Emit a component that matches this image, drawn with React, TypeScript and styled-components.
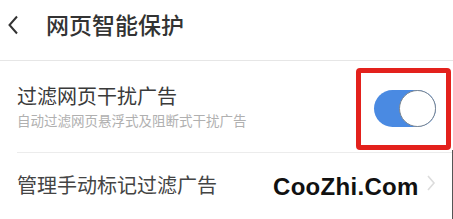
import React from "react";
import styled, { createGlobalStyle } from "styled-components";

const Global = createGlobalStyle`
  html, body { margin: 0; padding: 0; background: #fff; }
  body { font-family: "Noto Sans CJK SC", "Noto Sans", sans-serif; }
`;

const Page = styled.div`
  width: 453px;
  height: 219px;
  overflow: hidden;
  background: #fff;
  position: relative;
`;

const Header = styled.div`
  height: 60px;
  display: flex;
  align-items: center;
  border-bottom: 1px solid #e6e6e6;
  box-sizing: content-box;
`;

const Back = styled.div`
  width: 46px;
  height: 60px;
  display: flex;
  align-items: center;
  padding-left: 7px;
  box-sizing: border-box;
  margin-top: -10px;
`;

const Title = styled.div`
  font-size: 23px;
  font-weight: 500;
  color: #333;
  margin-top: -12px;
`;

const Row = styled.div<{ $h: number; $divider?: boolean }>`
  position: relative;
  height: ${(p) => p.$h}px;
  display: flex;
  align-items: center;
  padding: 0 16px 0 17px;
  box-sizing: border-box;
  ${(p) => (p.$divider ? "border-bottom: 1px solid #ececec; margin-left: 17px; padding-left: 0;" : "")}
`;

const TextCol = styled.div`
  flex: 1;
  display: flex;
  flex-direction: column;
  margin-top: -1px;
`;

const ItemTitle = styled.div`
  font-size: 20px;
  color: #3a3a3a;
  line-height: 24px;
`;

const ItemSub = styled.div`
  font-size: 13.5px;
  color: #b0b0b0;
  line-height: 18px;
  margin-top: 3px;
`;

const Track = styled.div`
  width: 62px;
  height: 37px;
  border-radius: 19px;
  background: #4a8ae2;
  position: relative;
  margin-right: 1px;
  margin-top: 3px;
`;

const Knob = styled.div`
  position: absolute;
  right: 0;
  top: 0;
  width: 37px;
  height: 37px;
  border-radius: 50%;
  background: #fff;
  border: 1.5px solid #7a8590;
  box-sizing: border-box;
`;

const Highlight = styled.div`
  position: absolute;
  left: 339px;
  top: 7px;
  width: 95px;
  height: 82px;
  border: 5px solid #e3211c;
  border-radius: 4px;
  box-sizing: border-box;
`;

const Row2Title = styled.div`
  flex: 1;
  font-size: 20px;
  color: #444;
  margin-top: -4px;
`;

const Watermark = styled.div`
  position: absolute;
  left: 273px;
  top: 20px;
  font-family: "Liberation Sans", Arial, sans-serif;
  font-weight: 700;
  font-size: 24px;
  color: #111;
  letter-spacing: 0.3px;
`;

const EdgeLine = styled.div`
  position: absolute;
  right: 0;
  top: 150px;
  width: 1px;
  height: 69px;
  background: #555;
`;

export default function App() {
  return (
    <Page>
      <Global />
      <Header>
        <Back>
          <svg width="12" height="20" viewBox="0 0 12 20">
            <path d="M10 1.5 L2.5 10 L10 18.5" fill="none" stroke="#333" strokeWidth="2" />
          </svg>
        </Back>
        <Title>网页智能保护</Title>
      </Header>
      <Row $h={92} $divider>
        <TextCol>
          <ItemTitle>过滤网页干扰广告</ItemTitle>
          <ItemSub>自动过滤网页悬浮式及阻断式干扰广告</ItemSub>
        </TextCol>
        <Track>
          <Knob />
        </Track>
        <Highlight />
      </Row>
      <Row $h={66}>
        <Row2Title>管理手动标记过滤广告</Row2Title>
        <svg width="10" height="16" viewBox="0 0 10 16" style={{ marginRight: 1, marginTop: -6 }}>
          <path d="M2 1 L8 8 L2 15" fill="none" stroke="#dcdcdc" strokeWidth="1.6" />
        </svg>
        <Watermark>CooZhi.Com</Watermark>
      </Row>
      <EdgeLine />
    </Page>
  );
}
